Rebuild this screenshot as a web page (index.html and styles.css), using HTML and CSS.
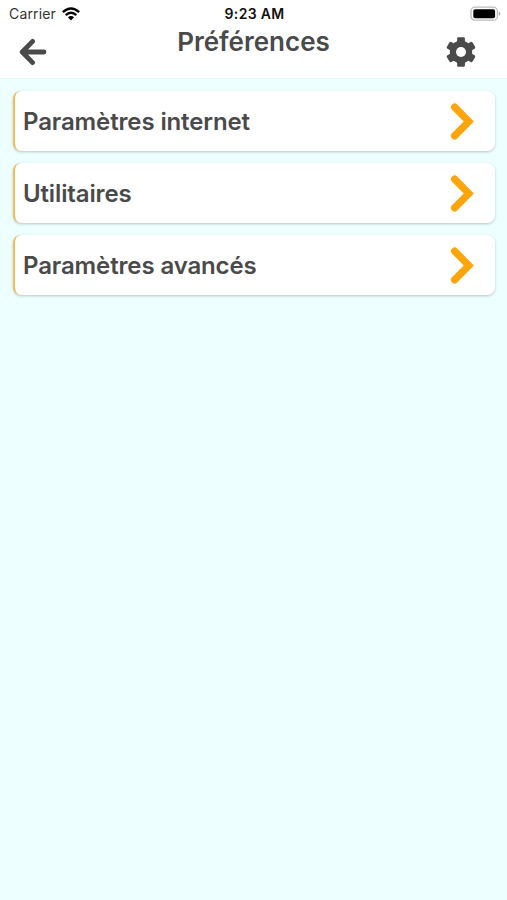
FILE: index.html
```
<!DOCTYPE html>
<html lang="fr">
<head>
    <meta charset="UTF-8">
    <meta name="viewport" content="width=device-width, initial-scale=1.0">
    <title>Préférences</title>
    <link rel="stylesheet" href="styles.css">
</head>
<body>
    <header>
        <div class="status-bar">
            <div class="carrier">
                <span>Carrier</span>
                <svg class="wifi" viewBox="0 0 18 14">
                    <path d="M.9 5.1Q9 -2 17.1 5.1M3.7 8.1Q9 3.4 14.3 8.1" fill="none" stroke="#000" stroke-width="2.5"/>
                    <path d="M5.9 10.2Q9 7.6 12.1 10.2L9 13.4Z"/>
                </svg>
            </div>
            <span class="time">9:23 AM</span>
            <div class="battery">
                <svg viewBox="0 0 31 16">
                    <rect x="1" y="1.2" width="26.4" height="13" rx="4" fill="#fff" stroke="#bbb" stroke-width="1.3"/>
                    <rect x="3.3" y="3.2" width="21.8" height="9" rx="1.8" fill="#000"/>
                    <path d="M28.8 5.5Q32 7.7 28.8 9.9Z" fill="#aaa"/>
                </svg>
            </div>
        </div>
        <nav class="nav-bar">
            <button class="icon-button" aria-label="Retour">
                <svg class="arrow" viewBox="0 0 28 28">
                    <path d="M13.6 3.4L3.2 14L13.6 24.6M4 14H25" />
                </svg>
            </button>
            <h1>Préférences</h1>
            <button class="icon-button settings" aria-label="Réglages">
                <svg class="gear" viewBox="-15 -15 30 30">
                    <circle r="11.2"/>
                    <rect x="-3.9" y="-14.8" width="7.8" height="29.6" rx="1.4"/>
                    <rect x="-3.9" y="-14.8" width="7.8" height="29.6" rx="1.4" transform="rotate(60)"/>
                    <rect x="-3.9" y="-14.8" width="7.8" height="29.6" rx="1.4" transform="rotate(120)"/>
                    <circle class="gear-hole" r="5"/>
                </svg>
            </button>
        </nav>
    </header>
    <main>
        <a class="card">
            <span>Paramètres internet</span>
            <svg class="chevron" viewBox="0 0 24 38"><path d="M4.6 4.1L18.8 18.5L4.6 32.9"/></svg>
        </a>
        <a class="card">
            <span>Utilitaires</span>
            <svg class="chevron" viewBox="0 0 24 38"><path d="M4.6 4.1L18.8 18.5L4.6 32.9"/></svg>
        </a>
        <a class="card">
            <span>Paramètres avancés</span>
            <svg class="chevron" viewBox="0 0 24 38"><path d="M4.6 4.1L18.8 18.5L4.6 32.9"/></svg>
        </a>
    </main>
</body>
</html>
```
FILE: styles.css
```
body {
    font-family: Inter, 'Liberation Sans', sans-serif;
    margin: 0;
    min-height: 100vh;
    background-color: #edfffe;
    color: #4a4a4a;
}

header {
    height: 78px;
    background-color: white;
    box-shadow: 0 1px 1px rgba(0, 0, 0, 0.03);
}

svg {
    display: block;
}

.status-bar {
    display: grid;
    grid-template-columns: 1fr auto 1fr;
    align-items: center;
    height: 27px;
    padding: 0 6px 0 8px;
    color: #111;
    font-size: 14px;
    line-height: 27px;
}

.carrier {
    display: flex;
    align-items: center;
    gap: 6px;
    padding-left: 1px;
    color: #333;
    letter-spacing: 0.15px;
}

.wifi {
    width: 18px;
    height: 14px;
}

.time {
    font-weight: 600;
    letter-spacing: 0.3px;
}

.battery {
    justify-self: end;
}

.battery svg {
    width: 31px;
    height: 16px;
}

.nav-bar {
    display: grid;
    grid-template-columns: 1fr auto 1fr;
    height: 51px;
    padding: 0 19px;
}

.icon-button {
    display: flex;
    align-items: center;
    height: 50px;
    padding: 0;
    border: none;
    background: none;
}

.settings {
    justify-content: flex-end;
    padding-right: 12px;
}

.arrow {
    width: 28px;
    height: 28px;
    fill: none;
    stroke: #4a4a4a;
    stroke-width: 4.8;
    stroke-linecap: round;
    stroke-linejoin: round;
}

.gear {
    width: 30px;
    height: 30px;
    fill: #4a4a4a;
}

.gear-hole {
    fill: white;
}

h1 {
    margin: 0;
    font-size: 26px;
    font-weight: 600;
    line-height: 30px;
}

main {
    display: flex;
    flex-direction: column;
    gap: 12px;
    padding: 13px 12px 13px 13px;
}

.card {
    display: flex;
    justify-content: space-between;
    align-items: center;
    box-sizing: border-box;
    height: 60px;
    padding: 1px 21px 0 8px;
    border-left: 2px solid #f5bd55;
    border-radius: 8px;
    background-color: white;
    box-shadow: 0 1px 3px rgba(0, 0, 0, 0.22);
    font-size: 24px;
    font-weight: 600;
    letter-spacing: -0.13px;
}

.chevron {
    width: 24px;
    height: 38px;
    fill: none;
    stroke: #ffa50a;
    stroke-width: 7.2;
    stroke-linecap: round;
    stroke-linejoin: miter;
}
```
